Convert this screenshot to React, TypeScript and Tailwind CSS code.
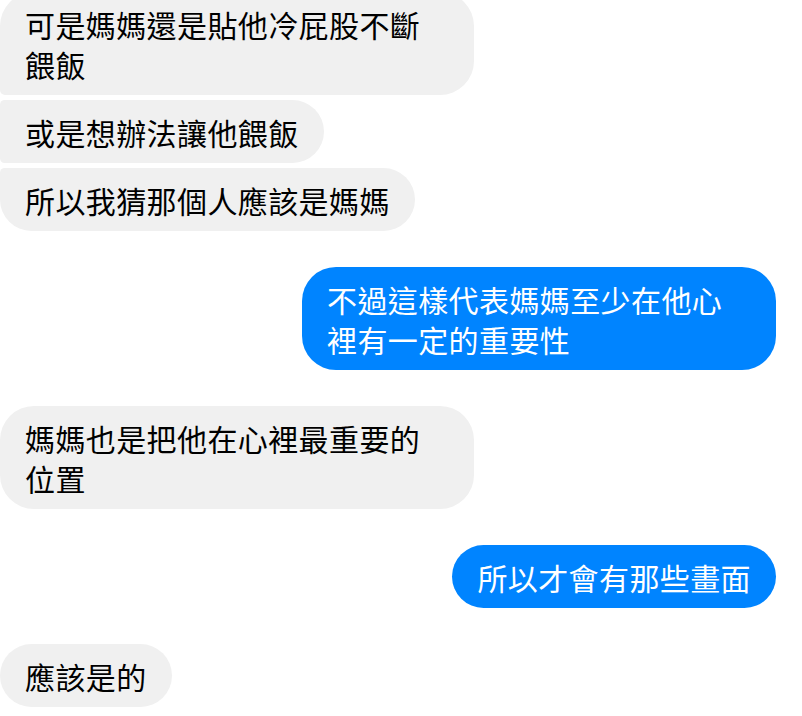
import clsx from "clsx";

type Msg = {
  text: string;
  mine?: boolean;
  corners?: string;
};

const groups: Msg[][] = [
  [
    { text: "可是媽媽還是貼他冷屁股不斷餵飯", corners: "rounded-bl-[5px]" },
    { text: "或是想辦法讓他餵飯", corners: "rounded-tl-[5px] rounded-bl-[5px]" },
    { text: "所以我猜那個人應該是媽媽", corners: "rounded-tl-[5px]" },
  ],
  [{ text: "不過這樣代表媽媽至少在他心裡有一定的重要性", mine: true }],
  [{ text: "媽媽也是把他在心裡最重要的位置" }],
  [{ text: "所以才會有那些畫面", mine: true }],
  [{ text: "應該是的" }],
];

const Bubble = ({ msg }: { msg: Msg }) => (
  <div
    className={clsx(
      "max-w-[474px] rounded-[34px] px-[25px] py-[11.5px] text-[30px] leading-[40px] tracking-[0.4px]",
      msg.mine
        ? "self-end bg-[#0084ff] text-white"
        : "self-start bg-[#f0f0f0] text-black",
      msg.corners
    )}
  >
    {msg.text}
  </div>
);

export default function App() {
  return (
    <div
      className="h-[716px] w-[802px] overflow-hidden bg-white"
      style={{ fontFamily: '"Noto Sans CJK TC", "Noto Sans", sans-serif' }}
    >
      <div className="-mt-[8px] flex w-[776px] flex-col gap-[36px]">
        {groups.map((group, i) => (
          <div key={i} className="flex flex-col gap-[5px]">
            {group.map((msg, j) => (
              <Bubble key={j} msg={msg} />
            ))}
          </div>
        ))}
      </div>
    </div>
  );
}
